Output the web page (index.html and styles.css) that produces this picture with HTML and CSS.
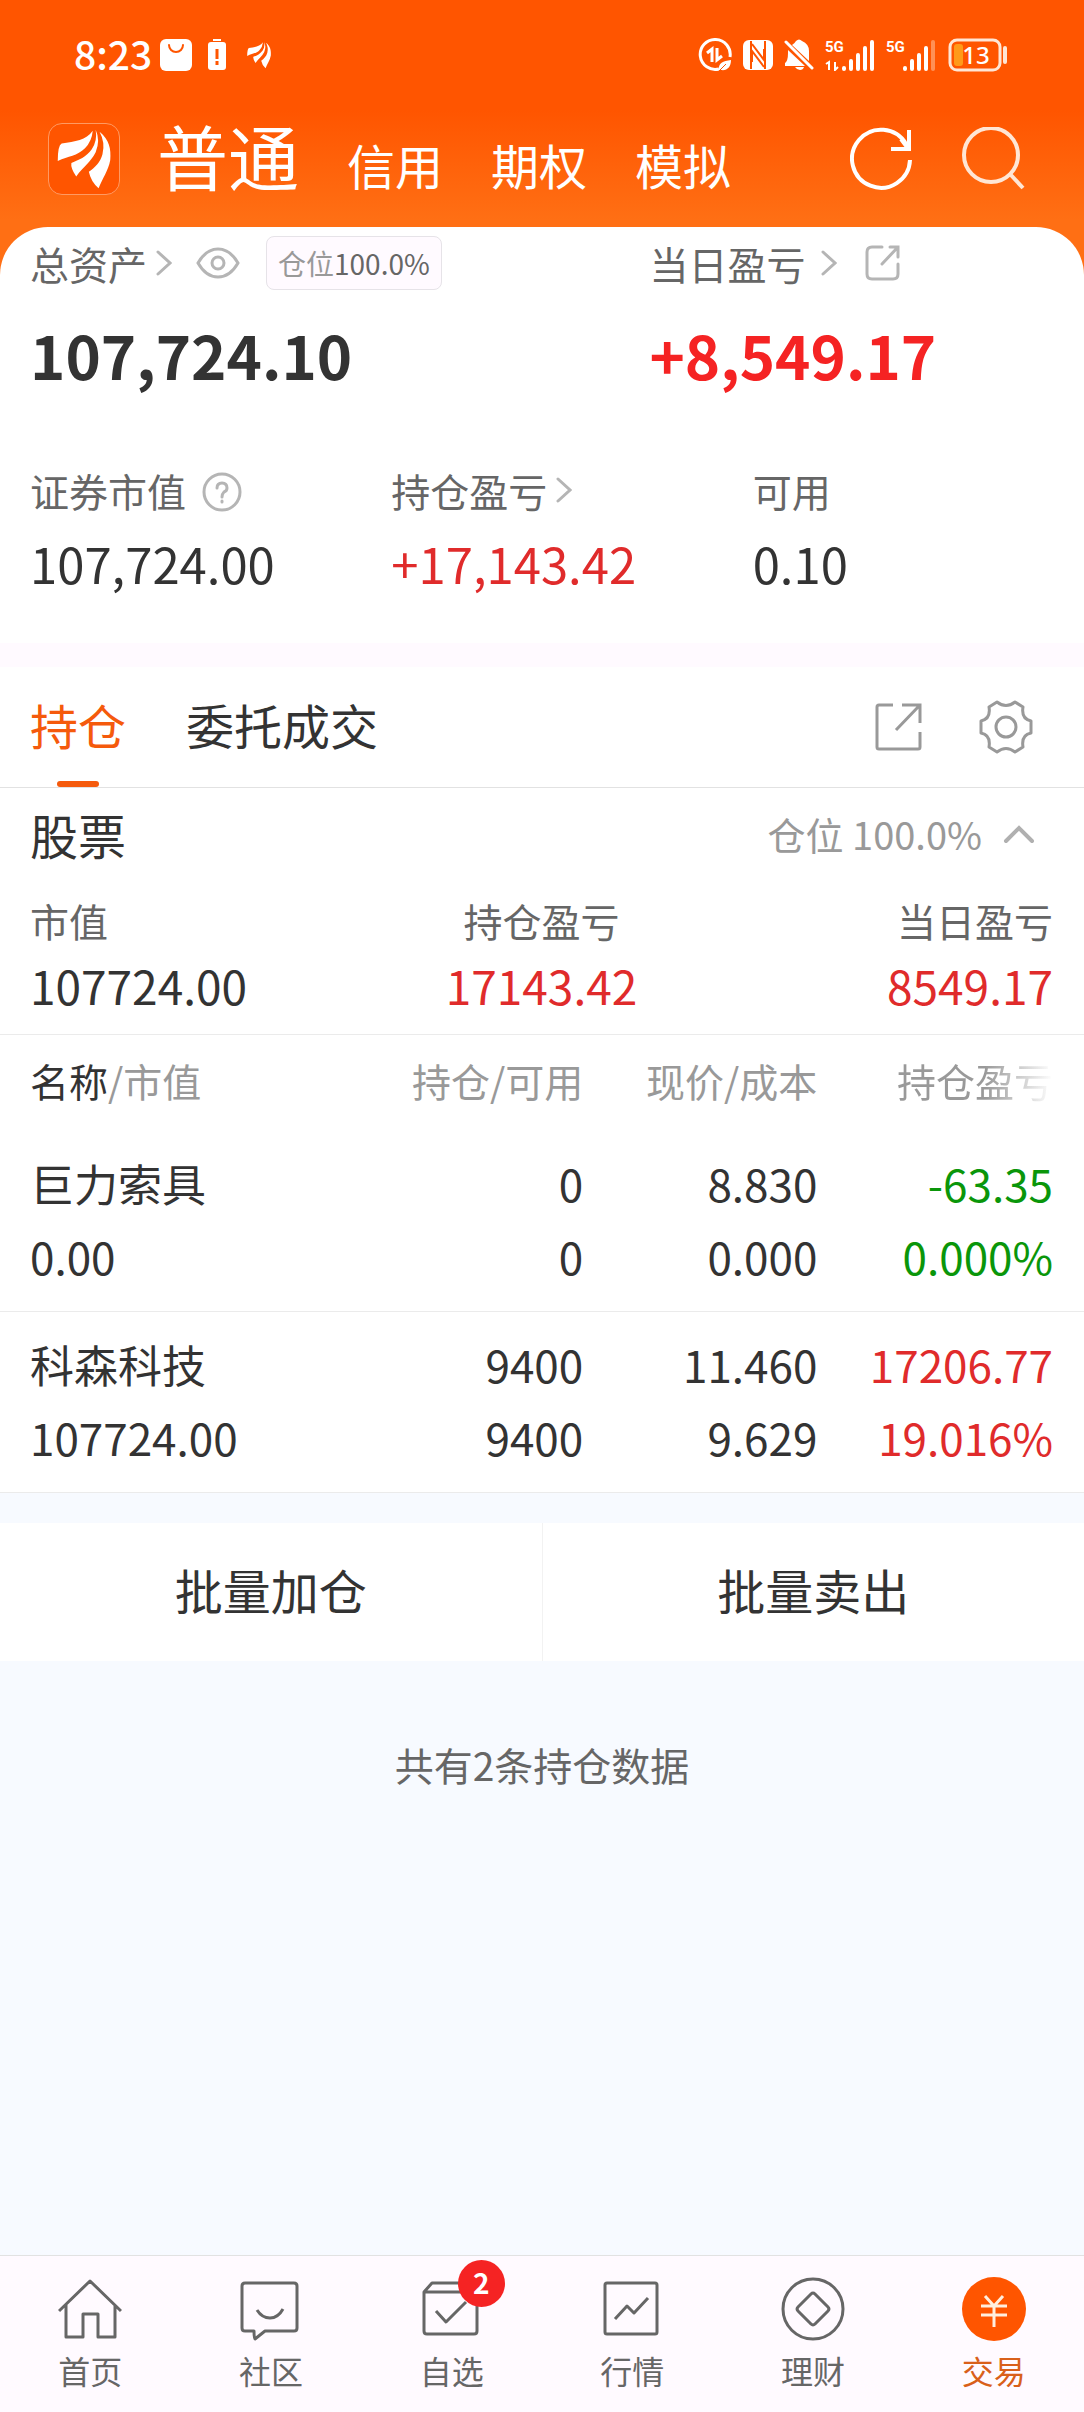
FILE: index.html
```html
<!DOCTYPE html>
<html lang="zh-CN">
<head>
<meta charset="utf-8">
<meta name="viewport" content="width=device-width, initial-scale=1">
<title>交易</title>
<link rel="stylesheet" href="styles.css">
</head>
<body>
<svg class="defs" aria-hidden="true">
  <symbol id="brand" viewBox="0 0 72 72">
    <path d="M45 7C38 17 27 18 13 20Q9 22 9 38C20 33 29 33 37 25Q44 18 45 7Z"/>
    <path d="M48 6Q53 17 48 29C43 39 35 44 28 54Q22 45 23 40C31 37 38 34 44 26Q50 17 48 6Z"/>
    <path d="M52 8C62 16 64 26 63 37C61 48 55 56 51 66Q43 59 41 49C47 45 53 39 55 31Q58 19 52 8Z"/>
  </symbol>
  <symbol id="chevron" viewBox="0 0 16 26">
    <path d="M2 2 14 13 2 24" fill="none" stroke="currentColor" stroke-width="3" stroke-linecap="round"/>
  </symbol>
</svg>
<div class="app">
  <div class="status">
    <div class="status-side">
      <span class="clock">8:23</span>
      <svg class="st-bag" viewBox="0 0 32 32"><rect width="32" height="32" rx="6" fill="#fff"/><path d="M9 6a7 7 0 0 0 14 0" fill="none" stroke="#ff5500" stroke-width="2" stroke-linecap="round"/></svg>
      <svg class="st-alert" viewBox="0 0 18 32"><path d="M5 1h8" stroke="#fff" stroke-width="2"/><rect y="3" width="18" height="28" rx="3" fill="#fff"/><path d="M9 10v10M9 22v4" stroke="#ff5500" stroke-width="3"/></svg>
      <svg class="st-brand" fill="#fff" viewBox="7 4 58 64"><use href="#brand" width="72" height="72"/></svg>
    </div>
    <div class="status-side">
      <svg class="st-data" viewBox="0 0 34 34"><path d="M21 31A15 15 0 1 1 32 19" fill="none" stroke="#fff" stroke-width="3"/><path d="M9 15l5-4v13M19 10v12l5-4" fill="none" stroke="#fff" stroke-width="3"/><path d="M21 32c-1-7 4-9 12-10 0 7-4 11-10 10z" fill="#fff"/><path d="M21 33l7-7" stroke="#ff5500"/></svg>
      <svg class="st-nfc" viewBox="0 0 30 30"><rect width="30" height="30" rx="6" fill="#fff"/><path d="M8 1v28M22 1v28M9 4 21 20V9M21 27 9 11v11" fill="none" stroke="#ff5500" stroke-width="2"/></svg>
      <svg class="st-bell" viewBox="0 0 30 32"><path d="M8 6Q11 4 12 2q3-3 6 0 7 3 7 10v10zM4 11l17 16H1v-3q3-2 3-10z" fill="#fff"/><path d="M11 28h9q-1 3-4 3t-5-3z" fill="#fff"/><path d="M2 3l26 26" stroke="#fff" stroke-width="3" stroke-linecap="round"/></svg>
      <span class="signal">
        <svg class="st-bars" viewBox="0 0 50 32"><path d="M1 25l3-2v8M10 23v8l3-3" fill="none" stroke="#fff" stroke-width="2"/><path d="M19 29v1M26 22v8M33 16v14M40 9v21M47 3v27" stroke="#fff" stroke-width="4" stroke-linecap="round"/></svg>
        <span class="net">5G</span>
      </span>
      <span class="signal">
        <svg class="st-bars" viewBox="0 0 50 32"><path d="M19 29v1M26 22v8M33 16v14M40 9v21" stroke="#fff" stroke-width="4" stroke-linecap="round"/><path d="M47 3v27" stroke="#ff9055" stroke-width="4" stroke-linecap="round"/></svg>
        <span class="net">5G</span>
      </span>
      <span class="battery">
        <svg viewBox="0 0 60 34"><rect x="2" y="2" width="50" height="30" rx="7" fill="none" stroke="#ffe6d5" stroke-width="3"/><rect x="6" y="6" width="9" height="22" rx="3" fill="#ff9a1a"/><path d="M57 10v14" stroke="#ffe6d5" stroke-width="4" stroke-linecap="round"/></svg>
        <span class="level">13</span>
      </span>
    </div>
  </div>

  <header class="topbar">
    <a class="logo" href="#" aria-label="主页"><svg viewBox="0 0 72 72" fill="#fff"><use href="#brand"/></svg></a>
    <nav class="accounts">
      <a class="account current" href="#">普通</a>
      <a class="account" href="#">信用</a>
      <a class="account" href="#">期权</a>
      <a class="account" href="#">模拟</a>
    </nav>
    <button class="icon-btn" aria-label="刷新"><svg viewBox="0 0 64 64" fill="none" stroke="#fff" stroke-width="4"><path d="M60 33A29 29 0 1 1 56 17M59 3v19H41M57 20l-6-8"/></svg></button>
    <button class="icon-btn" aria-label="搜索"><svg viewBox="0 0 64 64" fill="none" stroke="#ffe6d5" stroke-width="4"><circle cx="29" cy="28" r="27"/><path d="M48 47l13 14"/></svg></button>
  </header>

  <main>
    <section class="summary">
      <div class="overview">
        <div class="cell">
          <div class="label">总资产<svg class="chev"><use href="#chevron"/></svg>
            <button class="eye" aria-label="隐藏金额"><svg viewBox="0 0 44 32" fill="none" stroke="#b5b5b5" stroke-width="3"><path d="M2 16Q10 2 22 2t20 14Q34 30 22 30T2 16Z"/><circle cx="22" cy="16" r="6"/></svg></button>
            <span class="badge"><span class="badge-name">仓位</span>100.0%</span>
          </div>
          <div class="total">107,724.10</div>
        </div>
        <div class="cell">
          <div class="label">当日盈亏<svg class="chev far"><use href="#chevron"/></svg>
            <button class="share" aria-label="分享"><svg viewBox="0 0 36 36" fill="none" stroke="#b5b5b5" stroke-width="3" stroke-linecap="round"><path d="M17 2H7Q2 2 2 7v22q0 5 5 5h21q5 0 5-5V19M25 2h8v10M33 2 17 19"/></svg></button>
          </div>
          <div class="total bright">+8,549.17</div>
        </div>
      </div>
      <div class="details">
        <div class="cell">
          <div class="label">证券市值<button class="help" aria-label="说明"><svg viewBox="0 0 40 40" fill="none" stroke="#b5b5b5" stroke-width="3" stroke-linecap="round"><circle cx="20" cy="20" r="18"/><path d="M15 16q0-5 5-5t5 5q0 3-3 4-2 2-2 5M20 29v1"/></svg></button></div>
          <div class="amount">107,724.00</div>
        </div>
        <div class="cell">
          <div class="label">持仓盈亏<svg class="chev"><use href="#chevron"/></svg></div>
          <div class="amount up">+17,143.42</div>
        </div>
        <div class="cell">
          <div class="label">可用</div>
          <div class="amount">0.10</div>
        </div>
      </div>
    </section>

    <section class="positions">
      <div class="tabs">
        <button class="tab active">持仓</button>
        <button class="tab">委托成交</button>
        <button class="tool push" aria-label="导出"><svg viewBox="0 0 54 54" fill="none" stroke="#999" stroke-width="3"><path d="M22 5H8Q6 5 6 7v40q0 2 2 2h39q2 0 2-2V32M31 5h18v18M48 6 25 30"/></svg></button>
        <button class="tool" aria-label="设置"><svg viewBox="0 0 54 54" fill="none" stroke="#999" stroke-width="3" stroke-linejoin="round"><path d="M18 2Q27 9 36 2L44 7Q42 19 52 21V33Q42 35 44 47L36 52Q27 45 18 52L10 47Q12 35 2 33V21Q12 19 10 7Z"/><circle cx="27" cy="27" r="10"/></svg></button>
      </div>
      <div class="group-head">
        <h2 class="group-title">股票</h2>
        <button class="fold">仓位 100.0%<svg viewBox="0 0 32 20" fill="none" stroke="#b0b0b0" stroke-width="4" stroke-linecap="round"><path d="M3 17 16 4l13 13"/></svg></button>
      </div>
      <div class="group-stats">
        <div><div class="stat-name">市值</div><div class="stat">107724.00</div></div>
        <div class="mid"><div class="stat-name">持仓盈亏</div><div class="stat up">17143.42</div></div>
        <div class="end"><div class="stat-name">当日盈亏</div><div class="stat up">8549.17</div></div>
      </div>
      <table class="holdings">
        <colgroup><col class="c-name"><col class="c-qty"><col class="c-price"><col class="c-gain"></colgroup>
        <thead>
          <tr><th scope="col"><span class="dark">名称</span>/市值</th><th scope="col">持仓/可用</th><th scope="col">现价/成本</th><th scope="col"><span class="fade">持仓盈亏</span></th></tr>
        </thead>
        <tbody>
          <tr><td><div class="name">巨力索具</div><div>0.00</div></td><td><div>0</div><div>0</div></td><td><div>8.830</div><div>0.000</div></td><td class="down"><div>-63.35</div><div>0.000%</div></td></tr>
          <tr><td><div class="name">科森科技</div><div>107724.00</div></td><td><div>9400</div><div>9400</div></td><td><div>11.460</div><div>9.629</div></td><td class="up"><div>17206.77</div><div>19.016%</div></td></tr>
        </tbody>
      </table>
    </section>

    <div class="batch">
      <button class="batch-btn">批量加仓</button>
      <button class="batch-btn">批量卖出</button>
    </div>
    <p class="note">共有2条持仓数据</p>
  </main>

  <nav class="tabbar">
    <a class="item" href="#"><span class="pic"><svg viewBox="0 0 64 64"><path d="M1 34 32 4l31 30M8 28v32h17V37h15v23h17V28"/></svg></span>首页</a>
    <a class="item" href="#"><span class="pic"><svg viewBox="0 0 64 64"><path d="M6 6h49q3 0 3 3v42q0 3-3 3H26l-10 8q-1 0-1-8H6q-3 0-3-3V9q0-3 3-3ZM18 33q5 8 13 8t13-9"/></svg></span>社区</a>
    <a class="item" href="#"><span class="pic"><svg viewBox="0 0 64 64"><path d="M4 15v39q0 3 3 3h47q3 0 3-3V15l-6-9H12ZM4 15h53M16 34l10 11 20-20"/></svg><span class="count">2</span></span>自选</a>
    <a class="item" href="#"><span class="pic"><svg viewBox="0 0 64 64"><rect x="5" y="6" width="52" height="51" rx="2"/><path d="M15 42 27 29l7 7 14-15"/></svg></span>行情</a>
    <a class="item" href="#"><span class="pic"><svg viewBox="0 0 64 64"><circle cx="32" cy="32" r="30"/><path d="M30 17q2-2 4 0l13 13q2 2 0 4L34 47q-2 2-4 0L17 34q-2-2 0-4Z"/></svg></span>理财</a>
    <a class="item on" href="#"><span class="pic"><svg viewBox="0 0 64 64"><circle class="coin" cx="32" cy="32" r="32"/><path class="yen" d="M23 19l9 10 9-10M32 29v21M19 29h26M19 38h26"/></svg></span>交易</a>
  </nav>
</div>
</body>
</html>
```

FILE: styles.css
```css
* { box-sizing: border-box; }

body {
  margin: 0;
  font-family: "Noto Sans CJK SC", "Noto Sans", sans-serif;
  font-size: 39px;
  color: #333;
  background: #f7faff;
}

button {
  padding: 0;
  border: 0;
  background: none;
  font: inherit;
  color: inherit;
  cursor: pointer;
}

a { color: inherit; text-decoration: none; }
svg { display: block; flex: none; }
.defs { position: absolute; width: 0; height: 0; }

.app {
  display: flex;
  flex-direction: column;
  min-height: 100vh;
  background: linear-gradient(#ff5500 110px, #ff6f14 220px) top / 100% 300px no-repeat;
}

/* Phone status bar */
.status {
  display: flex;
  justify-content: space-between;
  align-items: center;
  height: 110px;
  padding: 0 76px 0 74px;
  color: #fff;
}
.status-side { display: flex; align-items: center; }
.clock { font-size: 39px; line-height: 48px; font-weight: 500; padding-bottom: 4px; }
.st-bag { width: 32px; height: 32px; margin-left: 8px; }
.st-alert { width: 18px; height: 32px; margin-left: 16px; }
.st-brand { width: 26px; height: 28px; margin-left: 20px; }
.st-data { width: 34px; height: 34px; }
.st-nfc { width: 30px; height: 30px; margin-left: 11px; }
.st-bell { width: 30px; height: 32px; margin-left: 11px; }
.signal { position: relative; margin-left: 11px; }
.st-bars { width: 50px; height: 32px; }
.net {
  position: absolute;
  top: 0;
  left: 0;
  font: 700 15px/16px Roboto, sans-serif;
}
.battery { position: relative; width: 60px; height: 34px; margin-left: 12px; }
.level {
  position: absolute;
  inset: 0 4px 0 0;
  text-align: center;
  font: 500 24px/34px "Noto Sans", sans-serif;
}

/* Account switcher */
.topbar {
  display: flex;
  align-items: center;
  height: 117px;
  padding: 0 58px 19px 48px;
  color: #fff;
}
.logo {
  border: 1px solid #ff9a62;
  border-radius: 14px;
  background: #ff5500;
}
.logo svg { width: 70px; height: 70px; }
.accounts {
  display: flex;
  flex: 1;
  align-items: baseline;
  gap: 48px;
  margin-left: 37px;
  line-height: 98px;
}
.account { font-size: 48px; }
.account.current { font-size: 71px; }
.icon-btn { margin-left: 48px; }
.icon-btn svg { width: 64px; height: 64px; }

/* Asset summary */
.summary {
  padding-bottom: 43px;
  border-radius: 48px 48px 0 0;
  background: #fff;
}
.overview { display: grid; grid-template-columns: 4fr 3fr; }
.details { display: grid; grid-template-columns: repeat(3, 1fr); padding-top: 45px; }
.cell { padding-left: 30px; }
.label {
  display: flex;
  align-items: center;
  line-height: 72px;
  color: #666;
}
.chev { width: 16px; height: 26px; margin-left: 9px; color: #b5b5b5; }
.chev.far { margin-left: 16px; }
.eye { margin-left: 24px; }
.eye svg { width: 44px; height: 32px; }
.badge {
  margin-left: 26px;
  padding: 0 11px;
  border: 1px solid #e6e3e8;
  border-radius: 8px;
  background: #fffaff;
  font-size: 28px;
  line-height: 52px;
}
.badge-name { color: #999; }
.share { margin-left: 28px; }
.share svg { width: 36px; height: 36px; }
.help { margin-left: 16px; padding-top: 4px; }
.help svg { width: 40px; height: 40px; }
.total { font-size: 60px; line-height: 110px; font-weight: 700; }
.amount { font-size: 49px; line-height: 74px; }
.up { color: #e02b2b; }
.bright { color: #f52323; }
.down { color: #0a960a; }

/* Positions */
.positions { border-top: 24px solid #fffaff; background: #fff; }
.tabs {
  display: flex;
  align-items: center;
  gap: 60px;
  padding: 0 51px 0 30px;
  border-bottom: 1px solid #e2e2e2;
}
.tab { position: relative; font-size: 48px; line-height: 114px; padding-bottom: 6px; }
.tab.active { color: #f55a0c; }
.tab.active::after {
  content: "";
  position: absolute;
  bottom: 0;
  left: calc(50% - 21px);
  width: 42px;
  height: 6px;
  border-radius: 3px;
  background: #f55a0c;
}
.tool svg { width: 54px; height: 54px; }
.tool.push { margin-left: auto; margin-right: -6px; }
.group-head {
  display: flex;
  align-items: center;
  justify-content: space-between;
  padding: 0 48px 0 30px;
  line-height: 92px;
}
.group-title { margin: 0; font-size: 48px; font-weight: 400; }
.fold { display: flex; align-items: center; gap: 20px; font-size: 38px; color: #999; }
.fold svg { width: 34px; height: 20px; }
.group-stats {
  display: grid;
  grid-template-columns: repeat(3, 1fr);
  padding: 0 31px 24px 30px;
  border-bottom: 1px solid #ebebeb;
}
.mid { text-align: center; }
.end { text-align: right; }
.stat-name { line-height: 80px; color: #666; }
.stat { font-size: 46px; line-height: 50px; }

.holdings { width: 100%; table-layout: fixed; border-collapse: collapse; }
.c-name { width: 32%; }
.c-qty { width: 21.8%; }
.c-price { width: 21.6%; }
.holdings th {
  padding: 0 0 5px;
  font-weight: 400;
  line-height: 91px;
  color: #999;
  text-align: right;
}
.holdings td {
  padding: 16px 0 18px;
  border-bottom: 1px solid #ebebeb;
  font-size: 44px;
  line-height: 73px;
  text-align: right;
}
.holdings th:first-child,
.holdings td:first-child { padding-left: 30px; text-align: left; }
.holdings th:last-child,
.holdings td:last-child { padding-right: 31px; }
.dark { color: #333; }
.fade {
  background: linear-gradient(to left, #fff 0, #999 68px);
  background-clip: text;
  -webkit-background-clip: text;
  color: transparent;
}

/* Batch actions */
.batch { display: flex; margin-top: 30px; background: #fff; }
.batch-btn { flex: 1; font-size: 48px; line-height: 132px; padding-bottom: 6px; }
.batch-btn + .batch-btn { border-left: 1px solid #f2f2f2; }
.note { margin: 68px 0; text-align: center; line-height: 70px; color: #666; }

/* Bottom navigation */
.tabbar {
  display: grid;
  grid-template-columns: repeat(6, 1fr);
  margin-top: auto;
  padding: 21px 0;
  border-top: 1px solid #e2e2e2;
  background: #fffaff;
}
main { flex: 1; background: linear-gradient(transparent 50px, #f7faff 50px); }
.item {
  display: flex;
  flex-direction: column;
  align-items: center;
  gap: 9px;
  font-size: 32px;
  line-height: 41px;
  color: #666;
}
.item.on { color: #d9601a; }
.pic { position: relative; }
.pic svg {
  width: 64px;
  height: 64px;
  fill: none;
  stroke: #666;
  stroke-width: 3;
  stroke-linejoin: round;
}
.pic .coin { fill: #ff5500; stroke: none; }
.pic .yen { stroke: #ffeede; }
.count {
  position: absolute;
  top: -17px;
  left: 38px;
  width: 47px;
  height: 47px;
  border-radius: 50%;
  background: #f52323;
  color: #fff;
  font-size: 28px;
  line-height: 45px;
  font-weight: 700;
  text-align: center;
}
```
